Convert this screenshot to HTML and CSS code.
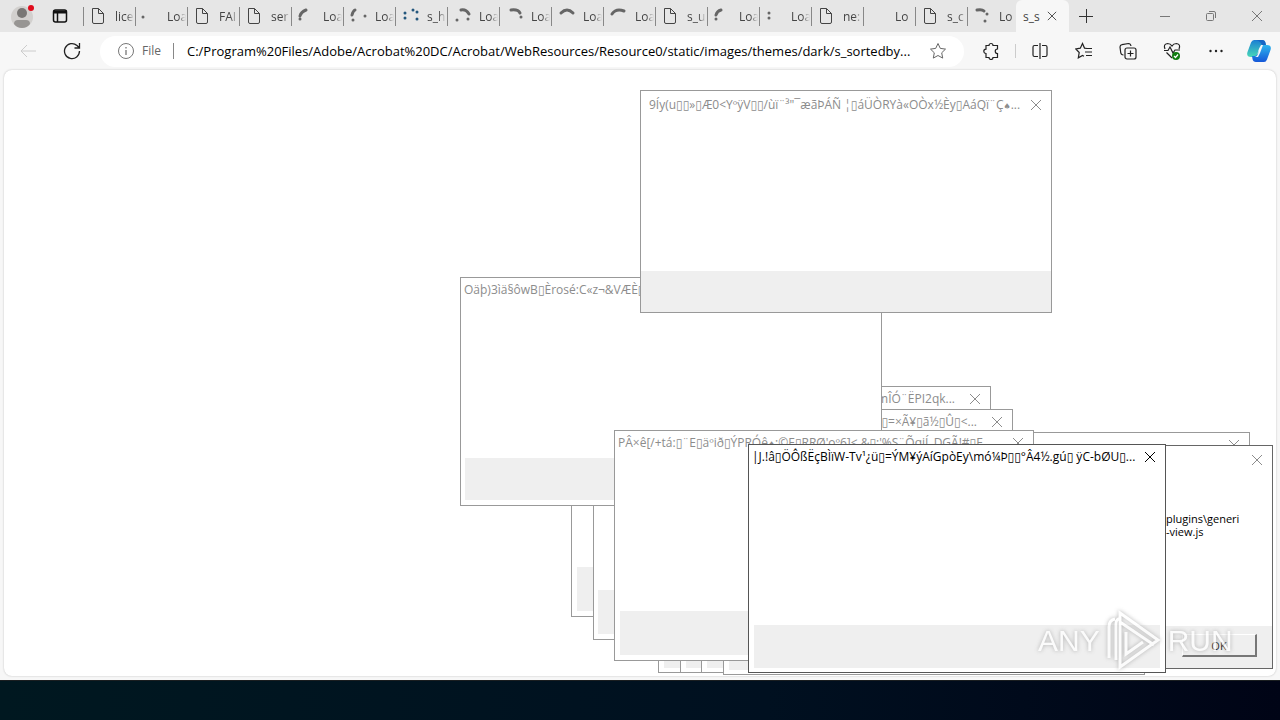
FILE: index.html
```html
<!DOCTYPE html>
<html lang="en">
<head>
    <meta charset="UTF-8">
    <meta name="viewport" content="width=device-width, initial-scale=1.0">
    <title>s_sortedby</title>
    <link rel="stylesheet" href="styles.css">
</head>
<body>
    <svg class="defs" aria-hidden="true">
        <symbol id="doc" viewBox="0 0 20 20"><path d="M4.500 2.500h6l5 5v8.500q0 1.500-1.500 1.500h-8q-1.500 0-1.500-1.500zM10.500 2.500v5h5"/></symbol>
        <symbol id="x" viewBox="0 0 12 12"><path d="M1 1l10 10M11 1L1 11"/></symbol>
    </svg>

    <header class="tabbar">
        <button class="profile" aria-label="Profile">
            <svg width="26" height="26" viewBox="0 0 26 26">
                <circle cx="13" cy="14" r="11" fill="#d2d0ce"/>
                <circle cx="13" cy="10" r="5" fill="#797775"/>
                <path d="M5 21q0-4 4-4h8q4 0 4 4q-3 4-8 4t-8-4z" fill="#979593"/>
                <circle cx="22" cy="5" r="3" fill="#e00b1c"/>
            </svg>
        </button>
        <button class="workspaces" aria-label="Tab actions">
            <svg width="16" height="16" viewBox="0 0 16 16" fill="none" stroke="#111" stroke-width="1.500"><rect x="1.500" y="2" width="13" height="12" rx="2"/><path d="M1.500 4h13" stroke-width="3"/><path d="M5.500 4v10"/></svg>
        </button>
        <nav class="tabs">
            <button class="tab"><svg class="icon"><use href="#doc"/></svg><span>lice</span></button>
            <button class="tab"><svg class="icon spin" viewBox="0 0 20 20"><path d="M3 11h0"/></svg><span>Loa</span></button>
            <button class="tab"><svg class="icon"><use href="#doc"/></svg><span>FAI</span></button>
            <button class="tab"><svg class="icon"><use href="#doc"/></svg><span>ser</span></button>
            <button class="tab"><svg class="icon spin" viewBox="0 0 20 20"><path d="M4 13h0M4 10Q5 6 10 4"/></svg><span>Loa</span></button>
            <button class="tab"><svg class="icon spin" viewBox="0 0 20 20"><path d="M4 9Q5 5 7 4M5 14h0M17 10h0"/></svg><span>Loa</span></button>
            <button class="tab"><svg class="icon spin blue" viewBox="0 0 20 20"><path d="M5 7h0M5 12h0M13 4h0M17 6h0M17 13h0"/></svg><span>s_h</span></button>
            <button class="tab"><svg class="icon spin" viewBox="0 0 20 20"><path d="M9 4Q14 3 17 8M5 14h0M16 13h0"/></svg><span>Loa</span></button>
            <button class="tab"><svg class="icon spin" viewBox="0 0 20 20"><path d="M7 4Q14 3 16 7M17 11h0"/></svg><span>Loa</span></button>
            <button class="tab"><svg class="icon spin" viewBox="0 0 20 20"><path d="M5 7Q11 1 17 7"/></svg><span>Loa</span></button>
            <button class="tab"><svg class="icon spin" viewBox="0 0 20 20"><path d="M4 8Q8 2 16 5"/></svg><span>Loa</span></button>
            <button class="tab"><svg class="icon"><use href="#doc"/></svg><span>s_u</span></button>
            <button class="tab"><svg class="icon spin" viewBox="0 0 20 20"><path d="M4 9Q5 5 9 4M4 13h0"/></svg><span>Loa</span></button>
            <button class="tab"><svg class="icon spin" viewBox="0 0 20 20"><path d="M5 7h0M5 12h0"/></svg><span>Loa</span></button>
            <button class="tab"><svg class="icon"><use href="#doc"/></svg><span>ne:</span></button>
            <button class="tab"><svg class="icon spin" viewBox="0 0 20 20"></svg><span>Lo</span></button>
            <button class="tab"><svg class="icon"><use href="#doc"/></svg><span>s_c</span></button>
            <button class="tab"><svg class="icon spin" viewBox="0 0 20 20"><path d="M5 4Q10 3 12 5M15 8h0M13 15h0"/></svg><span>Lo</span></button>
            <button class="tab active"><span>s_s</span><svg class="tab-close"><use href="#x"/></svg></button>
        </nav>
        <button class="new-tab" aria-label="New tab"><svg width="16" height="16" viewBox="0 0 16 16" stroke="#333"><path d="M8.500 1v14M1 8.500h14"/></svg></button>
        <div class="controls">
            <button aria-label="Minimize"><svg width="12" height="12" stroke="#777"><path d="M1 6.500h10"/></svg></button>
            <button aria-label="Restore"><svg width="12" height="12" fill="none" stroke="#777"><rect x="1.500" y="3.500" width="7" height="7" rx="1"/><path d="M4 1.500h5q1.500 0 1.500 1.500v5"/></svg></button>
            <button aria-label="Close"><svg width="12" height="12" stroke="#777"><use href="#x"/></svg></button>
        </div>
    </header>

    <div class="toolbar">
        <button aria-label="Back"><svg width="18" height="18" viewBox="0 0 18 18" fill="none" stroke="#ccc"><path d="M17 9H2M8 3L2 9l6 6"/></svg></button>
        <button aria-label="Refresh"><svg width="18" height="18" viewBox="0 0 18 18" fill="none" stroke="#222" stroke-width="1.300"><path d="M16.500 9A7.500 7.500 0 1 1 14 3.500L16 5.500M16.500 1v5h-5"/></svg></button>
        <form class="address">
            <svg width="16" height="16" viewBox="0 0 16 16" fill="none" stroke="#777"><circle cx="8" cy="8" r="7.500"/><path d="M8 7v5M8 4v1.500" stroke-width="1.300"/></svg>
            <label for="url">File</label>
            <input type="text" id="url" value="C:/Program%20Files/Adobe/Acrobat%20DC/Acrobat/WebResources/Resource0/static/images/themes/dark/s_sortedby...">
            <button type="button" aria-label="Favorite"><svg width="18" height="18" viewBox="0 0 18 18" fill="none" stroke="#666"><path d="M9 1.500l2.300 4.900 5.200.7-3.800 3.700 1 5.300L9 13.500l-4.700 2.600 1-5.300L1.500 7.100l5.200-.7z"/></svg></button>
        </form>
        <button aria-label="Extensions"><svg width="18" height="18" viewBox="0 0 18 18" fill="none" stroke="#222" stroke-width="1.200"><path d="M4 3.500h3a2 2 0 0 1 4 0h4.500V7a2 2 0 1 0 0 4.500v4H11a2 2 0 0 1-4 0H4v-4a2.200 2.200 0 1 1 0-4.400z"/></svg></button>
        <span class="divider"></span>
        <button aria-label="Split screen"><svg width="18" height="18" viewBox="0 0 18 18" fill="none" stroke="#222" stroke-width="1.200"><path d="M7 3.500H3.500q-1.500 0-1.500 1.500v8q0 1.500 1.500 1.500H7M11 3.500h3.500q1.500 0 1.500 1.500v8q0 1.500-1.500 1.500H11M9 1v16"/></svg></button>
        <button aria-label="Favorites"><svg width="18" height="18" viewBox="0 0 18 18" fill="none" stroke="#222" stroke-width="1.200"><path d="M12 6.500l-2.500-.4L7.500 1.500 5.300 6.200.8 7l3.400 3.500-.9 5.300 4.200-2.300 1.500.8M11 6.500h6M10 10h7M11 13.500h6"/></svg></button>
        <button aria-label="Collections"><svg width="18" height="18" viewBox="0 0 18 18" fill="none" stroke="#222" stroke-width="1.200"><rect x="6" y="6" width="11" height="11" rx="2"/><path d="M11.500 8.500v6M8.500 11.500h6M4.500 13Q2 13 1.700 10.500L1 5q0-2 2-2.300L9.500 1.500q2 0 2.500 2.500"/></svg></button>
        <button aria-label="Browser essentials"><svg width="18" height="18" viewBox="0 0 18 18" fill="none" stroke="#222" stroke-width="1.200"><path d="M2 7Q0 2 4.500 1.500 7.500 1.500 9 4q1.500-2.500 4.500-2.500Q18 2 16 7M1 8.500h4L7 5l3 6 2-3h5M3.500 10.500L9 16"/><circle cx="13" cy="14" r="4" fill="#107c10" stroke="none"/><path d="M11 14l1.500 1.500L15 12.500" stroke="#fff"/></svg></button>
        <button aria-label="Settings"><svg width="18" height="18" viewBox="0 0 18 18" fill="#222"><circle cx="3.500" cy="9" r="1.200"/><circle cx="9" cy="9" r="1.200"/><circle cx="14.500" cy="9" r="1.200"/></svg></button>
        <button class="copilot" aria-label="Copilot">
            <svg width="24" height="24" viewBox="0 0 24 24">
                <defs>
                    <linearGradient id="cl" x1="0" y1="0" x2="0" y2="1"><stop offset="0" stop-color="#1a7fd4"/><stop offset="1" stop-color="#48d8b8"/></linearGradient>
                    <linearGradient id="cr" x1="0" y1="0" x2="0" y2="1"><stop offset="0" stop-color="#2db6ee"/><stop offset="1" stop-color="#1557d8"/></linearGradient>
                </defs>
                <path d="M7 1h8q3 0 3.500 3l.5 3h-4q-2 0-3 3l-2 6q-1 2-3 2H4q-5 0-3.500-5L4 3.500Q5 1 7 1z" fill="url(#cl)"/>
                <path d="M17 23H9q-3 0-3.500-3L5 17h3q2 0 3-3l2-6q1-2 3-2h4q5 0 3.500 5L20 20.500Q19 23 17 23z" fill="url(#cr)"/>
                <path d="M12 10l2-4h2l-3 8-2 4H8q2 0 3-3z" fill="#f7f7f7"/>
                <path d="M7 1h8q3 0 3.500 3l.5 2h-4q-2-5-8-5z" fill="#1767c5"/>
            </svg>
        </button>
    </div>

    <main class="page"></main>

    <section class="dialog d-mid3"><div class="title"><span>mÎÓ¨ËPI2qk...</span><button aria-label="Close"><svg><use href="#x"/></svg></button></div><div class="foot"></div></section>
    <section class="dialog d-mid4"><div class="title"><span>▯=×Ã¥▯ã½▯Û▯&lt;...</span><button aria-label="Close"><svg><use href="#x"/></svg></button></div><div class="foot"></div></section>
    <section class="dialog d-left"><div class="title"><span>Oäþ)3ìä§ôwB▯Èrosé:C«z¬&amp;VÆÈ▯</span></div><div class="foot"></div></section>
    <section class="dialog d-top"><div class="title"><span>9Íy(u▯▯»▯Æ0&lt;YºÿV▯▯/ùï¨³"¯æãÞÁÑ ¦▯áÜÒRYà«OÒx½Èy▯AáQï¨Ç<small>♠</small>...</span><button aria-label="Close"><svg><use href="#x"/></svg></button></div><div class="foot"></div></section>
    <section class="dialog d-row1"><div class="foot"></div></section>
    <section class="dialog d-row2"><div class="foot"></div></section>
    <section class="dialog d-row3"><div class="foot"></div></section>
    <section class="dialog d-row4"><div class="foot"></div></section>
    <section class="dialog d-right"><div class="title"><span></span><button aria-label="Close"><svg><use href="#x"/></svg></button></div></section>
    <section class="dialog d-center"><div class="title"><span>PÂ×ê[/+tá:▯¨E▯äºið▯ÝPRÓê<small>♠</small>:©E▯RRØ'oº6]&lt; &amp;▯:'%S¨ÕqiÍ_DGÃ!#▯E</span><button aria-label="Close"><svg><use href="#x"/></svg></button></div><div class="foot"></div></section>
    <section class="dialog d-error">
        <div class="title"><span></span><button aria-label="Close"><svg><use href="#x"/></svg></button></div>
        <p>plugins\generi<br>-view.js</p>
        <div class="foot"><button class="ok">OK</button></div>
    </section>
    <section class="dialog d-active"><div class="title"><span>|J.!â▯ÖÔßËçBÌïW-Tv¹¿ü▯=ÝM¥ýAíGpòEy\mó¼Þ▯▯°Â4½.gú▯ ÿC-bØU▯...</span><button aria-label="Close"><svg><use href="#x"/></svg></button></div><div class="foot"></div></section>

    <div class="watermark">
        <span>ANY</span>
        <svg width="56" height="62" viewBox="0 0 56 62" fill="none" stroke="#fff" stroke-width="3"><path d="M10 50V14q0-6 5-5M3 48V17q0-7 6-8M14 3v54L52 30 14 3zM14 12l34 23M20 22v22l17-12"/></svg>
        <span>RUN</span>
    </div>

    <footer class="taskbar"></footer>
</body>
</html>
```

FILE: styles.css
```css
* { margin: 0; padding: 0; box-sizing: border-box; }
body {
    font-family: "Open Sans", "Noto Sans", "DejaVu Sans", sans-serif;
    font-size: 12px; height: 100vh; overflow: hidden; position: relative;
    display: flex; flex-direction: column; background: #f7f7f7; color: #000;
}
button { border: none; background: none; font: inherit; color: inherit; }
.defs { position: absolute; width: 0; height: 0; }

/* tab strip */
.tabbar { height: 32px; display: flex; background: #e6e6e6; flex: none; }
.tabbar button, .toolbar > button { display: flex; align-items: center; justify-content: center; flex: none; }
.profile { width: 44px; }
.workspaces { width: 32px; margin-right: 7px; }
.tabs { display: flex; min-width: 0; }
.tabbar .tab {
    width: 52px; height: 32px; padding: 0 1px 0 5px; justify-content: flex-start;
    position: relative; color: #444;
}
.tab::before { content: ""; position: absolute; left: 0; top: 7px; height: 19px; border-left: 1px solid #888; }
.tab span { flex: 1; overflow: hidden; white-space: nowrap; text-align: left; }
.tab:not(.active) span { -webkit-mask-image: linear-gradient(90deg, #000 60%, transparent); mask-image: linear-gradient(90deg, #000 60%, transparent); }
.icon { width: 20px; height: 20px; margin-right: 7px; flex: none; fill: none; stroke: #444; }
.spin { stroke: #666; stroke-width: 3; stroke-linecap: round; }
.blue { stroke: #24577d; }
.tabbar .active { width: 53px; margin-left: -3px; padding: 0 12px 0 7px; background: #f7f7f7; border-radius: 6px 6px 0 0; }
.active::before { display: none; }
.tab-close { width: 10px; height: 10px; stroke: #333; stroke-width: 1; flex: none; }
.new-tab { width: 34px; }
.controls { margin-left: auto; display: flex; }
.controls button { width: 46px; }

/* toolbar */
.toolbar { height: 38px; display: flex; align-items: center; padding-left: 6px; flex: none; }
.toolbar > button { width: 44px; height: 36px; }
.address {
    flex: 1; min-width: 0; height: 31px; margin: 0 5px 0 6px; padding: 0 17px 0 18px;
    display: flex; align-items: center; background: #fff; border-radius: 16px;
}
.address label { margin: 0 13px 0 8px; padding-right: 12px; border-right: 1px solid #888; color: #666; line-height: 16px; }
.address input { flex: 1; min-width: 0; border: none; outline: none; background: none; font: inherit; font-size: 13px; margin-right: 10px; }
.address button { display: flex; }
.divider { width: 1px; height: 14px; margin: 0 2px; background: #ccc; }
.toolbar .copilot { width: 42px; }

.page { flex: 1; margin: 0 4px 4px; background: #fff; border-radius: 8px; box-shadow: 0 0 2px #bbb; }
.taskbar { height: 40px; flex: none; border-top: 1px solid #1a1e20; background: linear-gradient(90deg, #001820, #001020 60%, #000416); }

/* dialogs stacked over the page */
.dialog {
    position: absolute; width: 420px; height: 231px; padding: 0 5px 5px;
    display: flex; flex-direction: column; background: #fff; border: 1px solid #999; color: #8c8c8c;
}
.title { display: flex; align-items: center; height: 23px; margin: 0 0 0 -2px; }
.title span { flex: 1; overflow: hidden; white-space: nowrap; }
.title small { font-size: 8px; }
.title button { width: 20px; height: 24px; display: flex; align-items: center; justify-content: center; }
.title svg { width: 12px; height: 12px; stroke: currentColor; }
.foot { height: 44px; margin-top: auto; background: #efefef; }
.d-mid3 { left: 571px; top: 386px; }
.d-mid4 { left: 593px; top: 409px; padding-left: 4px; }
.d-mid3 .title span, .d-mid4 .title span { text-align: right; margin-right: 10px; }
.d-left { left: 460px; top: 277px; width: 422px; height: 229px; padding-left: 4px; }
.d-left .title { margin-left: -1px; }
.d-left .foot { height: 42px; }
.d-top { left: 640px; top: 90px; width: 412px; height: 223px; padding: 2px 0 0; }
.d-top .title { margin: 0 5px 0 8px; }
.d-top .foot { height: 41px; }
.d-row1, .d-row2, .d-row3, .d-row4 { top: 445px; height: 228px; padding-bottom: 4px; }
.d-row1 { left: 658px; }
.d-row2 { left: 680px; }
.d-row3 { left: 701px; }
.d-row4 { left: 723px; top: 446px; width: 422px; height: 229px; }
.d-right { left: 830px; top: 432px; }
.d-center { left: 614px; top: 430px; }
.d-error { left: 850px; top: 445px; width: 423px; height: 224px; padding: 2px 0 0; border-color: #666; }
.d-error .title { margin-right: 5px; }
.d-error p { margin: 41px 0 0 315px; font-size: 11px; line-height: 13px; color: #000; }
.d-error .foot { height: 42px; display: flex; align-items: flex-start; justify-content: flex-end; padding: 8px 15px 0; }
.ok { width: 75px; height: 23px; color: #222; border: 1px solid #fff; border-right: 2px solid #777; border-bottom: 2px solid #777; font-size: 11px; }
.d-active { left: 748px; top: 444px; width: 418px; height: 229px; padding-bottom: 4px; border-color: #555; color: #000; }
.d-active .foot { height: 43px; }

.watermark {
    position: absolute; left: 1038px; top: 610px; display: flex; align-items: center; gap: 6px;
    font-family: "Liberation Sans Narrow", "Liberation Sans", sans-serif; font-size: 30px; line-height: 62px;
    color: #fff; opacity: .75; filter: drop-shadow(0 0 2px #999); pointer-events: none;
}
```
